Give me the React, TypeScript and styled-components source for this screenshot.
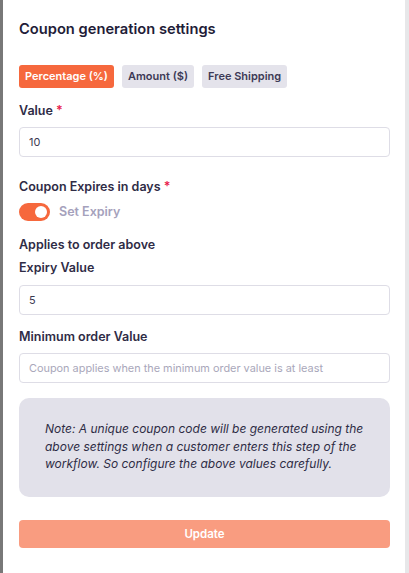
import React, { useState } from "react";
import styled, { createGlobalStyle } from "styled-components";

const Global = createGlobalStyle`
  html, body { margin: 0; padding: 0; background: #ffffff; }
  body { font-family: Inter, "Noto Sans", sans-serif; -webkit-font-smoothing: antialiased; }
  * { box-sizing: border-box; }
`;

const Frame = styled.div`
  display: flex;
  width: 409px;
  height: 573px;
  overflow: hidden;
`;

const Backdrop = styled.div`
  width: 3px;
  flex: none;
  background: #787878;
`;

const Panel = styled.div`
  flex: 1;
  background: #ffffff;
  padding: 19px 15px 0 16px;
  display: flex;
  flex-direction: column;
`;

const Track = styled.div`
  width: 4px;
  flex: none;
  background: #e7e7e9;
`;

const Title = styled.h2`
  margin: 0;
  font-size: 14.7px;
  line-height: 20px;
  font-weight: 600;
  color: #1f1d38;
`;

const Tabs = styled.div`
  display: flex;
  gap: 8px;
  margin-top: 26px;
`;

const Tab = styled.button<{ $active?: boolean }>`
  border: none;
  border-radius: 3px;
  height: 23px;
  padding: 0 6px;
  font-family: inherit;
  font-size: 11px;
  font-weight: 600;
  line-height: 23px;
  cursor: pointer;
  background: ${(p) => (p.$active ? "#f6683d" : "#e4e3eb")};
  color: ${(p) => (p.$active ? "#ffffff" : "#3d3a56")};
`;

const Label = styled.div<{ $top: number }>`
  margin-top: ${(p) => p.$top}px;
  font-size: 12.5px;
  line-height: 16px;
  font-weight: 600;
  color: #2f2c46;
`;

const Req = styled.span`
  color: #e8194b;
`;

const Input = styled.input<{ $top: number }>`
  margin-top: ${(p) => p.$top}px;
  width: 100%;
  height: 30px;
  border: 1px solid #dedde6;
  border-radius: 4px;
  padding: 0 9px;
  font-family: inherit;
  font-size: 10.9px;
  color: #3b3950;
  background: #ffffff;
  outline: none;
  &::placeholder { color: #a9a7ba; }
`;

const ToggleRow = styled.label`
  margin-top: 8px;
  display: flex;
  align-items: center;
  gap: 9px;
  cursor: pointer;
`;

const Switch = styled.span<{ $on: boolean }>`
  position: relative;
  width: 31px;
  height: 18px;
  border-radius: 9px;
  background: ${(p) => (p.$on ? "#f6683d" : "#d6d5de")};
  flex: none;
  &::after {
    content: "";
    position: absolute;
    top: 3px;
    left: ${(p) => (p.$on ? "16px" : "3px")};
    width: 12px;
    height: 12px;
    border-radius: 50%;
    background: #ffffff;
  }
`;

const SwitchText = styled.span`
  font-size: 12.5px;
  font-weight: 600;
  color: #a5a1bc;
  line-height: 16px;
`;

const Note = styled.div`
  margin-top: 15px;
  background: #e2e1ea;
  border-radius: 10px;
  padding: 22px 12px 24px 26px;
  font-size: 12px;
  line-height: 17.5px;
  font-style: italic;
  color: #2e2c45;
`;

const Submit = styled.button`
  margin-top: 23px;
  width: 100%;
  height: 28px;
  border: none;
  border-radius: 4px;
  background: #f99c80;
  color: #ffffff;
  font-family: inherit;
  font-size: 11.5px;
  font-weight: 600;
`;

export default function App() {
  const [tab, setTab] = useState(0);
  const [on, setOn] = useState(true);
  const tabs = ["Percentage (%)", "Amount ($)", "Free Shipping"];
  return (
    <>
      <Global />
      <Frame>
        <Backdrop />
        <Panel>
          <Title>Coupon generation settings</Title>
          <Tabs>
            {tabs.map((t, i) => (
              <Tab key={t} $active={i === tab} onClick={() => setTab(i)}>
                {t}
              </Tab>
            ))}
          </Tabs>
          <Label $top={15}>
            Value <Req>*</Req>
          </Label>
          <Input $top={8} defaultValue="10" />
          <Label $top={22}>
            Coupon Expires in days <Req>*</Req>
          </Label>
          <ToggleRow onClick={() => setOn(!on)}>
            <Switch $on={on} />
            <SwitchText>Set Expiry</SwitchText>
          </ToggleRow>
          <Label $top={16}>Applies to order above</Label>
          <Label $top={7}>Expiry Value</Label>
          <Input $top={9} defaultValue="5" />
          <Label $top={14}>Minimum order Value</Label>
          <Input $top={8} placeholder="Coupon applies when the minimum order value is at least" />
          <Note>
            Note: A unique coupon code will be generated using the above settings when a customer
            enters this step of the workflow. So configure the above values carefully.
          </Note>
          <Submit disabled>Update</Submit>
        </Panel>
        <Track />
      </Frame>
    </>
  );
}
